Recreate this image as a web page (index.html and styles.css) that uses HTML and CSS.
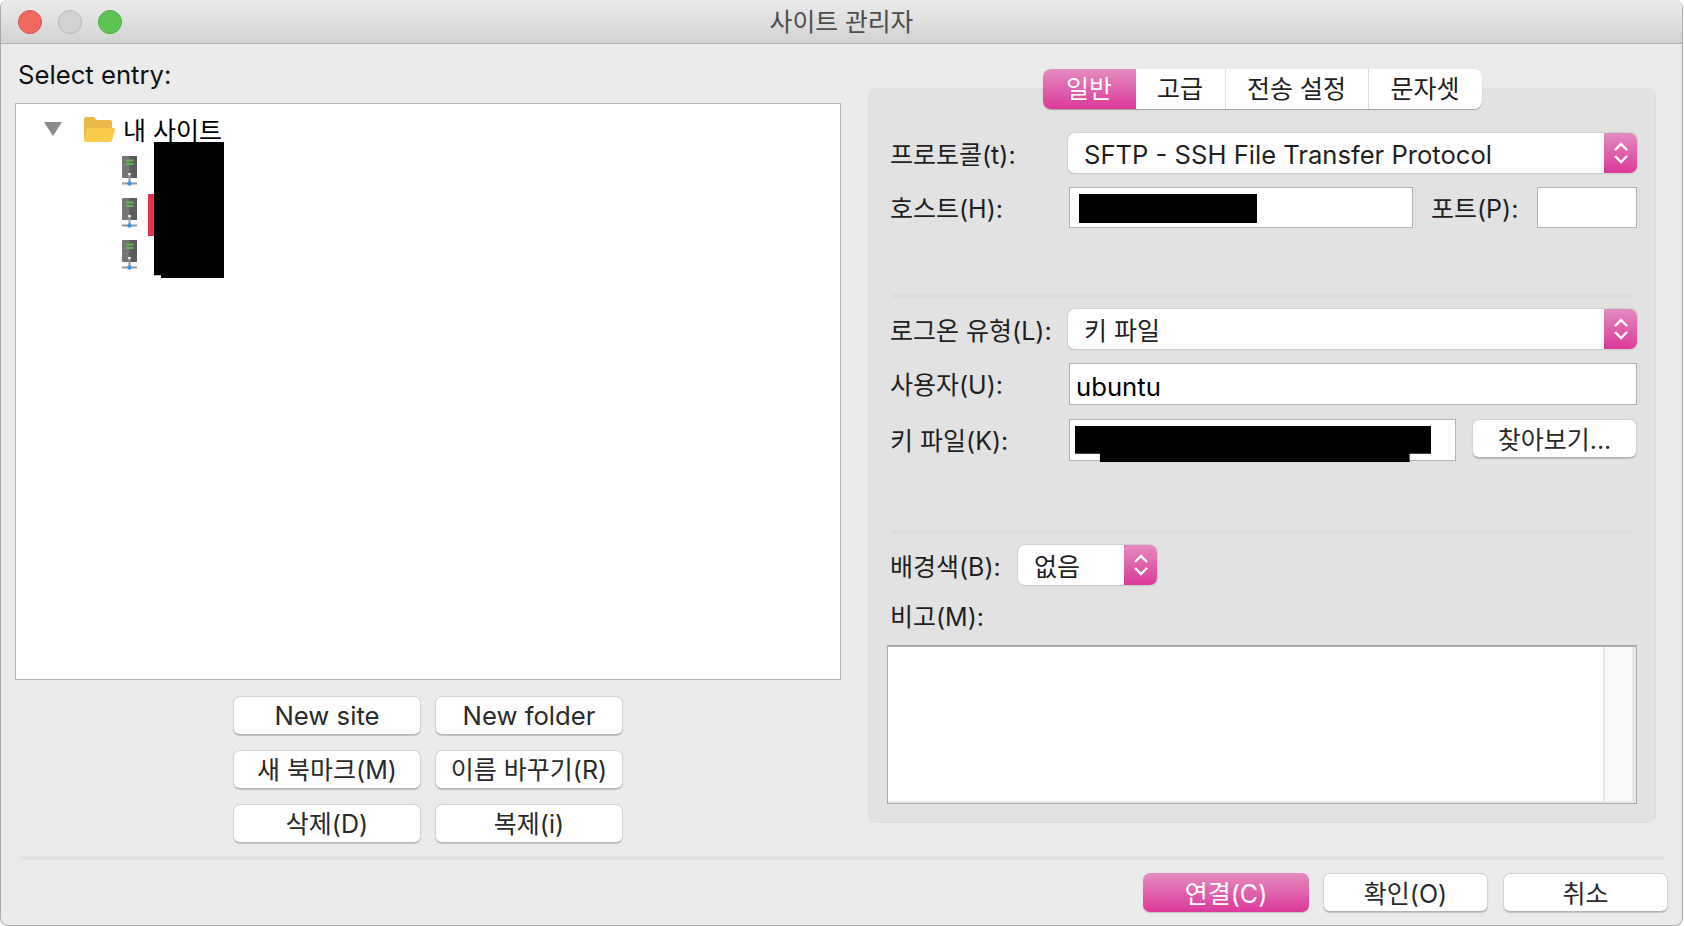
FILE: index.html
```html
<!DOCTYPE html>
<html lang="ko">
<head>
<meta charset="utf-8">
<title>사이트 관리자</title>
<link rel="stylesheet" href="styles.css">
</head>
<body>
<div class="window">
  <header class="titlebar">
    <div class="lights">
      <span class="light red"></span>
      <span class="light gray"></span>
      <span class="light green"></span>
    </div>
    <div class="title">사이트 관리자</div>
  </header>
  <main class="main">
    <section class="left">
      <div class="entry-label">Select entry:</div>
      <div class="tree">
        <div class="tree-row folder-row">
          <svg class="twist" width="18" height="14" viewBox="0 0 18 14"><path d="M0 0H18L9 14Z" fill="#8c8c8c"/></svg>
          <svg class="folder" width="32" height="26" viewBox="0 0 32 26">
            <path d="M1 3a2 2 0 0 1 2-2h8l3 3h13a2 2 0 0 1 2 2v18H3a2 2 0 0 1-2-2Z" fill="#e8b945"/>
            <path d="M4 12h26a2 2 0 0 1 2 2l-3 10a2 2 0 0 1-2 2H3a2 2 0 0 1-2-2Z" fill="#fbcb4d"/>
          </svg>
          <span class="tree-text">내 사이트</span>
        </div>
        <div class="tree-row server-row">
          <svg class="server" width="15" height="30" viewBox="0 0 15 30"><use href="#srv"/></svg>
        </div>
        <div class="tree-row server-row">
          <svg class="server" width="15" height="30" viewBox="0 0 15 30"><use href="#srv"/></svg>
        </div>
        <div class="tree-row server-row">
          <svg class="server" width="15" height="30" viewBox="0 0 15 30"><use href="#srv"/></svg>
        </div>
        <div class="mark"></div>
        <div class="blackout"></div>
      </div>
      <div class="site-buttons">
        <button class="btn latin">New site</button>
        <button class="btn latin">New folder</button>
        <button class="btn">새 북마크(M)</button>
        <button class="btn">이름 바꾸기(R)</button>
        <button class="btn">삭제(D)</button>
        <button class="btn">복제(i)</button>
      </div>
    </section>
    <section class="panel">
      <nav class="tabs">
        <div class="tab active">일반</div>
        <div class="tab">고급</div>
        <div class="tab">전송 설정</div>
        <div class="tab">문자셋</div>
      </nav>
      <div class="row r-protocol">
        <label class="label">프로토콜(t):</label>
        <div class="select grow"><span class="select-text latin">SFTP - SSH File Transfer Protocol</span><span class="stepper"><svg width="16" height="26" viewBox="0 0 16 26"><use href="#chev"/></svg></span></div>
      </div>
      <div class="row r-host">
        <label class="label">호스트(H):</label>
        <div class="input host"><span class="hide hide-host"></span></div>
        <label class="label port-label">포트(P):</label>
        <div class="input port"></div>
      </div>
      <div class="sep sep-a"></div>
      <div class="row r-logon">
        <label class="label">로그온 유형(L):</label>
        <div class="select grow"><span class="select-text">키 파일</span><span class="stepper"><svg width="16" height="26" viewBox="0 0 16 26"><use href="#chev"/></svg></span></div>
      </div>
      <div class="row r-user">
        <label class="label">사용자(U):</label>
        <div class="input user latin">ubuntu</div>
      </div>
      <div class="row r-key">
        <label class="label">키 파일(K):</label>
        <div class="input key"><span class="hide hide-key"></span></div>
        <button class="btn browse">찾아보기...</button>
      </div>
      <div class="sep sep-b"></div>
      <div class="row r-color">
        <label class="label narrow">배경색(B):</label>
        <div class="select small"><span class="select-text">없음</span><span class="stepper"><svg width="16" height="26" viewBox="0 0 16 26"><use href="#chev"/></svg></span></div>
      </div>
      <div class="memo-label">비고(M):</div>
      <div class="memo"><div class="memo-text"></div><div class="memo-scroll"></div></div>
    </section>
  </main>
  <div class="bottom-sep"></div>
  <footer class="actions">
    <button class="btn action primary">연결(C)</button>
    <button class="btn action">확인(O)</button>
    <button class="btn action">취소</button>
  </footer>
</div>
<svg class="defs" width="0" height="0">
  <defs>
    <g id="srv">
      <rect x="0" y="0" width="15" height="22" rx="1" fill="#757575"/>
      <rect x="7.5" y="0" width="7.5" height="22" fill="#5c5c5c"/>
      <rect x="3.500" y="3.500" width="8" height="2" fill="#5cb84a"/>
      <rect x="3.500" y="7" width="8" height="2" fill="#5cb84a"/>
      <rect x="6.300" y="17" width="2.400" height="2.400" fill="#fff"/>
      <rect x="6.500" y="20" width="2" height="8" fill="#8d98a3"/>
      <rect x="0" y="26.500" width="15" height="2" fill="#8d98a3"/>
      <circle cx="7.500" cy="27.500" r="2.200" fill="#3d94e0"/>
    </g>
    <g id="chev" fill="none" stroke="#fff" stroke-width="2.4">
      <path d="M2 10 8 4l6 6"/>
      <path d="M2 16 8 22l6-6"/>
    </g>
  </defs>
</svg>
</body>
</html>
```

FILE: styles.css
```css
* { box-sizing: border-box; }
html, body { margin: 0; padding: 0; height: 100%; background: #fff; overflow: hidden; }
body { font-family: Inter, "Noto Sans CJK KR", sans-serif; font-size: 25px; color: #1f1f1f; }
.defs { position: absolute; }

.window {
  width: 1683px; height: 926px; background: #ebebeb;
  border: 1px solid #a9a9a9; border-top: 0; border-radius: 8px;
  display: flex; flex-direction: column; overflow: hidden;
}
.titlebar {
  height: 44px; flex: none; display: flex; align-items: center; justify-content: center;
  position: relative; background: linear-gradient(#ebebeb, #d3d3d3);
  border-bottom: 1px solid #b0b0b0;
}
.lights { position: absolute; left: 17px; top: 10px; display: flex; gap: 16px; }
.light { width: 24px; height: 24px; border-radius: 50%; border: 1px solid; }
.red { background: #f0675e; border-color: #d9544b; }
.gray { background: #d2d2d2; border-color: #b9b9b9; }
.green { background: #5dc453; border-color: #4eae45; }
.title { font-size: 24.8px; color: #4c4c4c; line-height: 40px; }

.main { height: 812px; flex: none; display: flex; padding-left: 14px; }
.left { width: 826px; flex: none; }
.entry-label { height: 59px; padding-top: 14px; line-height: 34px; font-size: 25.7px; margin-left: 3px; color: #111; }
.tree {
  height: 577px; background: #fff; border: 1px solid #b5b5b5; padding-top: 4px; position: relative;
}
.tree-row { height: 42px; display: flex; align-items: center; }
.twist { margin-left: 28px; }
.folder { margin-left: 21px; }
.tree-text { margin-left: 8px; font-size: 25px; color: #000; }
.server { margin-left: 106px; }
.mark { position: absolute; left: 132px; top: 90px; width: 8px; height: 42px; background: #e6304f; }
.blackout {
  position: absolute; left: 138px; top: 38px; width: 70px; height: 136px; background: #000;
  clip-path: polygon(0 0, 100% 0, 100% 100%, 10% 100%, 10% 98%, 0 98%);
}

.btn {
  font: inherit; color: #2a2a2a; background: #fff; border: 1px solid #d4d4d4; border-bottom-color: #b4b4b4;
  border-radius: 7px; box-shadow: 0 1px 1px rgba(0,0,0,.18); padding: 2px 0 0; height: 39px; line-height: 34px;
}
.btn.latin, .input.latin { font-size: 25.7px; }
.select-text.latin { font-size: 25.6px; }
.site-buttons {
  display: grid; grid-template-columns: 188px 188px; grid-auto-rows: 39px; column-gap: 14px; row-gap: 15px;
  margin: 16px 0 0 218px;
}
.site-buttons .btn { padding-top: 0; }

.panel {
  width: 788px; height: 735px; flex: none; margin: 44px 0 0 27px; padding: 0 18px;
  background: #e2e2e2; border: 1px solid #dedede; border-radius: 8px;
}
.tabs {
  display: grid; grid-template-columns: 93px 90px 143px 113px; width: 439px; height: 40px; margin: -20px auto 0;
  background: #fff; border-radius: 8px; box-shadow: 0 1px 1px rgba(0,0,0,.3);
}
.tab { display: flex; align-items: center; justify-content: center; border-right: 1px solid #dcdcdc; padding-bottom: 4px; }
.tab:last-child { border-right: 0; }
.active { color: #fff; background: linear-gradient(#e48cc0, #dc389a); border: 0; border-radius: 8px 0 0 8px; }

.row { display: flex; align-items: flex-start; }
.label { width: 181px; flex: none; padding: 3px 0 0 3px; line-height: 38px; font-size: 25px; }
.narrow { width: 131px; }
.r-protocol { margin-top: 24px; height: 40px; }
.r-host { margin-top: 14px; height: 41px; }
.r-logon { margin-top: 11px; height: 40px; }
.r-user { margin-top: 14px; height: 42px; }
.r-key { margin-top: 14px; height: 42px; }
.r-color { margin-top: 11px; height: 40px; }

.select {
  height: 40px; display: flex; background: #fff; border-radius: 7px; overflow: hidden;
  box-shadow: 0 0 0 1px #d0d0d0, 0 1px 1px 0 #a8a8a8;
}
.grow { flex: 1; }
.small { width: 139px; }
.select-text { flex: 1; padding: 2px 0 0 16px; line-height: 40px; white-space: nowrap; }
.stepper {
  width: 33px; flex: none; display: flex; align-items: center; justify-content: center;
  background: linear-gradient(#e48cc0, #dc389a);
}

.input { height: 100%; background: #fff; border: 1px solid #b4b4b4; margin-left: 1px; }
.host { width: 344px; padding: 6px 0 0 9px; }
.port { width: 100px; margin-left: 0; }
.port-label { width: 106px; margin-left: 18px; padding-left: 0; }
.user { flex: 1; padding-left: 6px; line-height: 46px; color: #000; }
.key { width: 387px; padding: 6px 0 0 5px; }
.browse { width: 165px; margin-left: 16px; }
.hide { display: block; background: #000; }
.hide-host { width: 178px; height: 29px; }
.hide-key { width: 356px; height: 36px; clip-path: polygon(0 0, 100% 0, 100% 77%, 94% 77%, 94% 100%, 7% 100%, 7% 77%, 0 77%); }

.sep { height: 4px; background: #dcdcdc; margin-left: 4px; margin-right: 5px; }
.sep-a { margin-top: 66px; }
.sep-b { margin-top: 69px; }

.memo-label { margin-top: 17px; height: 30px; padding-left: 3px; line-height: 30px; }
.memo {
  margin-top: 13px; height: 159px; width: 750px; background: #fff; border: 1px solid #a9a9a9;
  border-width: 2px 1px 1px 1px; display: flex; box-shadow: inset -4px -2px 0 #e6e6e6;
}
.memo-text { flex: 1; }
.memo-scroll { width: 29px; margin-right: 4px; margin-bottom: 2px; background: #fafafa; border-left: 2px solid #e8e8e8; }

.bottom-sep { height: 4px; background: #e2e2e2; margin: 0 18px 0 19px; flex: none; }
.actions { display: flex; justify-content: flex-end; gap: 15px; padding-right: 14px; margin-top: 13px; }
.action { width: 165px; }
.primary { width: 166px; margin-right: -1px; color: #fff; border: 0; background: linear-gradient(#e48cc0, #dc389a); }
```
